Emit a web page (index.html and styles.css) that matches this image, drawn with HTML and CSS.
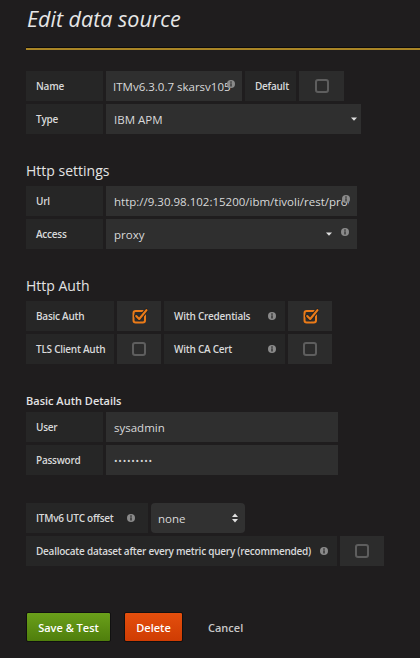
FILE: index.html
```html
<!DOCTYPE html>
<html lang="en">
<head>
<meta charset="utf-8">
<title>Edit data source</title>
<link rel="stylesheet" href="styles.css">
</head>
<body>
<div class="page">
  <header class="page-header">
    <h1 class="title">Edit data source</h1>
  </header>
  <div class="rule"></div>

  <div class="group g-top">
    <div class="row">
      <div class="label w-std">Name</div>
      <div class="input w-name">
        <span class="val">ITMv6.3.0.7 skarsv105</span>
        <svg class="info info-over" viewBox="0 0 8 8" width="8" height="8"><circle cx="4" cy="4" r="4" fill="#8a8a8a"/><circle cx="4" cy="2.1" r="0.8" fill="#2f2f2f"/><rect x="3.35" y="3.3" width="1.3" height="3.2" fill="#2f2f2f"/></svg>
      </div>
      <div class="label w-default">Default</div>
      <div class="cb-cell w-cb45"><span class="cb"></span></div>
    </div>
    <div class="row">
      <div class="label w-std">Type</div>
      <div class="input w-type">
        <span class="val">IBM APM</span>
        <svg class="caret caret-type" viewBox="0 0 6 4" width="6" height="4"><path d="M0 0.5 H6 L3 3.8 Z" fill="#e0e0e0"/></svg>
      </div>
    </div>
  </div>

  <h3 class="section-title s-http">Http settings</h3>
  <div class="group">
    <div class="row">
      <div class="label w-std">Url</div>
      <div class="input w-url">
        <span class="val">http://9.30.98.102:15200/ibm/tivoli/rest/providers</span>
        <svg class="info info-over" viewBox="0 0 8 8" width="8" height="8"><circle cx="4" cy="4" r="4" fill="#8a8a8a"/><circle cx="4" cy="2.1" r="0.8" fill="#2f2f2f"/><rect x="3.35" y="3.3" width="1.3" height="3.2" fill="#2f2f2f"/></svg>
      </div>
    </div>
    <div class="row">
      <div class="label w-std">Access</div>
      <div class="input w-url">
        <span class="val">proxy</span>
        <svg class="caret" viewBox="0 0 6 4" width="6" height="4"><path d="M0 0.5 H6 L3 3.8 Z" fill="#e0e0e0"/></svg>
        <svg class="info info-end" viewBox="0 0 8 8" width="8" height="8"><circle cx="4" cy="4" r="4" fill="#8a8a8a"/><circle cx="4" cy="2.1" r="0.8" fill="#2f2f2f"/><rect x="3.35" y="3.3" width="1.3" height="3.2" fill="#2f2f2f"/></svg>
      </div>
    </div>
  </div>

  <h3 class="section-title s-auth">Http Auth</h3>
  <div class="group">
    <div class="row">
      <div class="label w-auth">Basic Auth</div>
      <div class="cb-cell w-cb44">
        <svg class="cb-checked" viewBox="0 0 16 16" width="16" height="16"><rect x="1.5" y="3" width="11.5" height="11.5" rx="2.2" fill="none" stroke="#eb7b18" stroke-width="2"/><path d="M4.2 8 L7.2 11 L14.5 2.2" fill="none" stroke="#262626" stroke-width="4.2" stroke-linecap="round" stroke-linejoin="round"/><path d="M4.2 8 L7.2 11 L14.5 2.2" fill="none" stroke="#eb7b18" stroke-width="2.1" stroke-linecap="round" stroke-linejoin="round"/></svg>
      </div>
      <div class="label w-cred">With Credentials
        <svg class="info info-label" viewBox="0 0 8 8" width="8" height="8"><circle cx="4" cy="4" r="4" fill="#8a8a8a"/><circle cx="4" cy="2.1" r="0.8" fill="#262626"/><rect x="3.35" y="3.3" width="1.3" height="3.2" fill="#262626"/></svg>
      </div>
      <div class="cb-cell w-cb44">
        <svg class="cb-checked" viewBox="0 0 16 16" width="16" height="16"><rect x="1.5" y="3" width="11.5" height="11.5" rx="2.2" fill="none" stroke="#eb7b18" stroke-width="2"/><path d="M4.2 8 L7.2 11 L14.5 2.2" fill="none" stroke="#262626" stroke-width="4.2" stroke-linecap="round" stroke-linejoin="round"/><path d="M4.2 8 L7.2 11 L14.5 2.2" fill="none" stroke="#eb7b18" stroke-width="2.1" stroke-linecap="round" stroke-linejoin="round"/></svg>
      </div>
    </div>
    <div class="row">
      <div class="label w-auth">TLS Client Auth</div>
      <div class="cb-cell w-cb44"><span class="cb"></span></div>
      <div class="label w-cred">With CA Cert
        <svg class="info info-label" viewBox="0 0 8 8" width="8" height="8"><circle cx="4" cy="4" r="4" fill="#8a8a8a"/><circle cx="4" cy="2.1" r="0.8" fill="#262626"/><rect x="3.35" y="3.3" width="1.3" height="3.2" fill="#262626"/></svg>
      </div>
      <div class="cb-cell w-cb44"><span class="cb"></span></div>
    </div>
  </div>

  <h6 class="sub-title">Basic Auth Details</h6>
  <div class="group">
    <div class="row">
      <div class="label w-std">User</div>
      <div class="input w-user"><span class="val">sysadmin</span></div>
    </div>
    <div class="row">
      <div class="label w-std">Password</div>
      <div class="input w-user"><span class="val dots">•••••••••</span></div>
    </div>
  </div>

  <div class="group g-extra">
    <div class="row">
      <div class="label w-utc">ITMv6 UTC offset
        <svg class="info info-label" viewBox="0 0 8 8" width="8" height="8"><circle cx="4" cy="4" r="4" fill="#8a8a8a"/><circle cx="4" cy="2.1" r="0.8" fill="#262626"/><rect x="3.35" y="3.3" width="1.3" height="3.2" fill="#262626"/></svg>
      </div>
      <div class="input select-box w-select">
        <span class="val">none</span>
        <svg class="updown" viewBox="0 0 6 10" width="6" height="10"><path d="M0 4 L3 0.5 L6 4 Z M0 6 L3 9.5 L6 6 Z" fill="#e0e0e0"/></svg>
      </div>
    </div>
    <div class="row">
      <div class="label w-dealloc">Deallocate dataset after every metric query (recommended)
        <svg class="info info-label" viewBox="0 0 8 8" width="8" height="8"><circle cx="4" cy="4" r="4" fill="#8a8a8a"/><circle cx="4" cy="2.1" r="0.8" fill="#262626"/><rect x="3.35" y="3.3" width="1.3" height="3.2" fill="#262626"/></svg>
      </div>
      <div class="cb-cell w-cb44"><span class="cb"></span></div>
    </div>
  </div>

  <div class="actions">
    <button class="btn btn-success">Save &amp; Test</button>
    <button class="btn btn-danger">Delete</button>
    <a class="btn-link">Cancel</a>
  </div>
</div>
</body>
</html>
```

FILE: styles.css
```css
html, body {
  margin: 0;
  padding: 0;
  background: #1f1d1e;
  color: #d8d9da;
  font-family: "Open Sans", "Liberation Sans", sans-serif;
}

.page {
  padding-left: 26px;
  overflow: hidden;
}

.page-header {
  padding: 5px 0 15px 0;
}

.title {
  margin: 0;
  font-size: 21.5px;
  line-height: 28px;
  font-style: italic;
  font-weight: 500;
  color: #e6e6e6;
  padding-left: 1px;
}

.rule {
  height: 2px;
  background: #a98526;
  box-shadow: 0 -1px 0 #0d0c0c;
}

.group {
  display: flex;
  flex-direction: column;
  gap: 3px;
}

.g-top {
  margin-top: 21px;
}

.row {
  display: flex;
  gap: 3px;
  height: 30px;
}

.label {
  box-sizing: border-box;
  display: flex;
  align-items: center;
  gap: 8px;
  padding: 0 9px 0 10px;
  background: #262626;
  font-size: 10px;
  font-weight: 600;
  letter-spacing: -0.25px;
  color: #d8d9da;
  white-space: nowrap;
}

.input {
  position: relative;
  box-sizing: border-box;
  display: flex;
  align-items: center;
  padding: 0 8px 0 8px;
  background: #2f2f2f;
  font-size: 11.5px;
  color: #d8d9da;
  overflow: hidden;
}

.val {
  flex: 1;
  min-width: 0;
  white-space: nowrap;
  overflow: hidden;
}

.dots {
  font-size: 9.5px;
  letter-spacing: 0.75px;
}

.w-std { width: 77px; }
.w-name { width: 136px; padding-left: 7px; }
.w-default { width: 51px; }
.w-cb45 { width: 45px; }
.w-cb44 { width: 44px; }
.w-type { width: 255px; }
.w-url { width: 251px; }
.w-auth { width: 88px; }
.w-cred { width: 121px; }
.w-user { width: 232px; }
.w-utc { width: 122px; padding-right: 13px; }
.w-select { width: 94px; padding-left: 7px; }
.w-dealloc { width: 311px; }

.info {
  flex: none;
}

.info-over {
  position: absolute;
  right: 7px;
  top: 9px;
}

.info-end {
  margin-left: 9px;
  margin-top: -5px;
}

.info-label {
  margin-left: auto;
}

.caret {
  flex: none;
}

.caret-type {
  margin-right: -4px;
}

.select-box {
  border-radius: 4px;
  background: #313131;
}

.updown {
  flex: none;
  margin-right: -1px;
}

.cb-cell {
  box-sizing: border-box;
  display: flex;
  align-items: center;
  justify-content: center;
  background: #2c2c2c;
}

.cb {
  box-sizing: border-box;
  width: 14px;
  height: 14px;
  border: 2px solid #5e5e5e;
  border-radius: 3px;
}

.cb-checked {
  margin-left: 2px;
  margin-top: -1px;
}

.section-title {
  margin: 27px 0 5px 0;
  font-size: 14px;
  line-height: 20px;
  font-weight: 400;
  color: #e3e3e3;
}

.sub-title {
  margin: 29px 0 3px 0;
  font-size: 11px;
  line-height: 16px;
  font-weight: 600;
  color: #e3e3e3;
}

.g-extra {
  margin-top: 28px;
}

.actions {
  display: flex;
  align-items: center;
  gap: 13px;
  margin-top: 46px;
}

.btn {
  box-sizing: border-box;
  height: 30px;
  padding: 0;
  border: 1px solid #111;
  border-radius: 2px;
  font-family: "Open Sans", "Liberation Sans", sans-serif;
  font-size: 11px;
  font-weight: 600;
  color: #ffffff;
  white-space: nowrap;
  cursor: pointer;
}

.btn-success {
  width: 85px;
  background: linear-gradient(#6aa01a, #4f7e0c);
}

.btn-danger {
  width: 59px;
  background: linear-gradient(#e44f0d, #cf3c03);
}

.btn-link {
  padding: 0 12px;
  font-size: 11px;
  font-weight: 600;
  color: #c8c8c8;
}
```
